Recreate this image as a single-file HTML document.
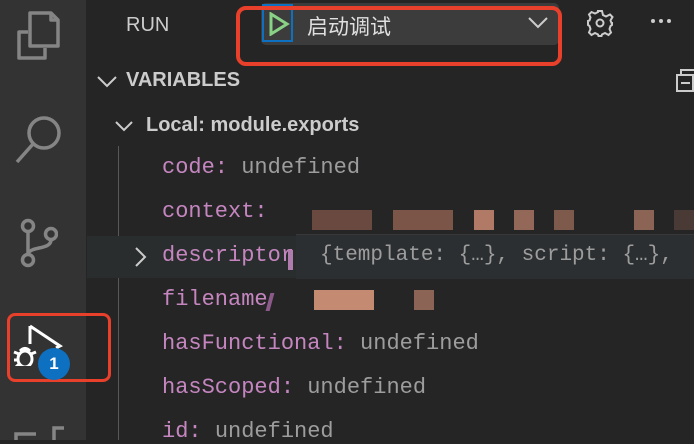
<!DOCTYPE html>
<html><head><meta charset="utf-8"><style>
body{margin:0;width:694px;height:440px;overflow:hidden;background:#252526;position:relative;font-family:"Liberation Sans","Noto Sans CJK SC",sans-serif}
.act{position:absolute;left:0;top:0;width:86px;height:440px;background:#333333}
.a{position:absolute}
.mono{font-family:"Liberation Mono",monospace;font-size:22px;position:absolute;white-space:pre}
.k{color:#c586c0}.v{color:#9d9d9d}
.pix{position:absolute;height:20px}
</style></head><body>
<div class="act"></div>
<svg class="a" style="left:14px;top:10px" width="50" height="52" viewBox="0 0 50 52" fill="none" stroke="#858585" stroke-width="3.5" stroke-linejoin="round">
<path d="M14 22 H5 V48 H31 V38"/><path d="M16 3 H37 L44 10 V36 H16 Z"/><path d="M37 3 V10 H44"/></svg>
<svg class="a" style="left:14px;top:113px" width="50" height="52" viewBox="0 0 50 52" fill="none" stroke="#858585" stroke-width="3.5">
<circle cx="30" cy="20" r="15"/><path d="M19 31 L3 49"/></svg>
<svg class="a" style="left:18px;top:218px" width="40" height="50" viewBox="0 0 40 50" fill="none" stroke="#858585" stroke-width="3.5">
<circle cx="10" cy="8" r="5.5"/><circle cx="10" cy="42" r="5.5"/><circle cx="33" cy="16" r="5.5"/><path d="M10 14 V36 M33 22 C33 32 12 28 10 36"/></svg>
<div class="a" style="left:7px;top:313px;width:104px;height:69px;border:3px solid #e8402a;border-radius:8px;box-sizing:border-box"></div>
<svg class="a" style="left:12px;top:322px" width="52" height="44" viewBox="0 0 52 44" fill="none" stroke="#fff" stroke-width="3">
<path d="M18 4 V22 M18 4 L48 24 L44 26"/><ellipse cx="13" cy="37" rx="7" ry="8"/><path d="M2 30 L7 32 M2 38 H6 M3 46 L7 42 M24 30 L19 32 M8 29 Q13 24 18 29"/></svg>
<div class="a" style="left:38px;top:348px;width:32px;height:32px;border-radius:50%;background:#0e70c0;color:#fff;font-weight:bold;font-size:17px;text-align:center;line-height:32px">1</div>
<svg class="a" style="left:14px;top:425px" width="50" height="15" viewBox="0 0 50 15" fill="none" stroke="#858585" stroke-width="3.5"><path d="M2 15 V9 H22 M40 15 V3 H54"/></svg>

<div class="a" style="left:126px;top:14px;color:#cccccc;font-size:20px">RUN</div>
<div class="a" style="left:261px;top:3px;width:298px;height:42px;background:#3c3c3c;border-radius:5px"></div>
<div class="a" style="left:262px;top:4px;width:31px;height:38px;border:2px solid #0e70c0;box-sizing:border-box"></div>
<svg class="a" style="left:268px;top:12px" width="22" height="24" viewBox="0 0 22 24" fill="none" stroke="#89d185" stroke-width="3"><path d="M3 2 L19 12 L3 22 Z"/></svg>
<div class="a" style="left:307px;top:11px;color:#e0e0e0;font-size:21px">启动调试</div>
<svg class="a" style="left:528px;top:17px" width="20" height="12" viewBox="0 0 20 12" fill="none" stroke="#ccc" stroke-width="2"><path d="M1 1 L10 10 L19 1"/></svg>
<div class="a" style="left:236px;top:6px;width:326px;height:60px;border:4px solid #e8402a;border-radius:10px;box-sizing:border-box"></div>
<svg class="a" style="left:585px;top:8px" width="30" height="30" viewBox="0 0 30 30" fill="none" stroke="#ccc" stroke-width="2">
<circle cx="15" cy="15" r="3.5"/><path d="M13 3 H17 L18 7 L21 8.5 L25 6.5 L27.5 9 L25.5 12.5 L26.5 15 L27 15 V17 L25.5 18 L24.5 21 L26 24.5 L23.5 27 L20 25 L17 26.5 L16.5 28 H13.5 L13 26.5 L10 25 L6.5 27 L4 24.5 L5.5 21 L4.5 18 L3 17 V13 L4.5 12.5 L5.5 9.5 L4 6.5 L6.5 4 L10 5.5 L13 4 Z"/></svg>
<div class="a" style="left:651px;top:19px;width:4px;height:4px;border-radius:2px;background:#ccc"></div>
<div class="a" style="left:659px;top:19px;width:4px;height:4px;border-radius:2px;background:#ccc"></div>
<div class="a" style="left:667px;top:19px;width:4px;height:4px;border-radius:2px;background:#ccc"></div>

<svg class="a" style="left:96px;top:75px" width="22" height="14" viewBox="0 0 22 14" fill="none" stroke="#ccc" stroke-width="2"><path d="M2 2 L11 11 L20 2"/></svg>
<div class="a" style="left:126px;top:69px;color:#cccccc;font-size:20px;font-weight:bold">VARIABLES</div>
<svg class="a" style="left:676px;top:68px" width="18" height="24" viewBox="0 0 18 24" fill="none" stroke="#ccc" stroke-width="2"><rect x="5" y="2" width="16" height="14"/><rect x="1" y="7" width="16" height="16" fill="#252526"/><path d="M5 15 H14"/></svg>
<svg class="a" style="left:114px;top:120px" width="20" height="14" viewBox="0 0 20 14" fill="none" stroke="#ccc" stroke-width="2"><path d="M2 2 L10 10 L18 2"/></svg>
<div class="a" style="left:146px;top:114px;color:#cccccc;font-size:20px;font-weight:bold">Local: module.exports</div>
<div class="a" style="left:118px;top:146px;width:1px;height:294px;background:#585858"></div>

<div class="a" style="left:87px;top:236px;width:607px;height:42px;background:#2a2d2e"></div>
<div class="a" style="left:296px;top:234px;width:398px;height:44px;background:#2c2f31;border-top:1px solid #383838"></div>

<div class="mono" style="left:162px;top:155px"><span class="k">code:</span> <span class="v">undefined</span></div>
<div class="mono" style="left:162px;top:199px"><span class="k">context:</span></div>
<div class="pix" style="left:312px;top:210px;width:60px;background:#6a4a40"></div>
<div class="pix" style="left:393px;top:210px;width:60px;background:#7a5548"></div>
<div class="pix" style="left:474px;top:210px;width:20px;background:#b07a66"></div>
<div class="pix" style="left:514px;top:210px;width:20px;background:#946858"></div>
<div class="pix" style="left:554px;top:210px;width:20px;background:#7e5a4c"></div>
<div class="pix" style="left:634px;top:210px;width:20px;background:#8c6455"></div>
<div class="pix" style="left:674px;top:210px;width:20px;background:#4a3a35"></div>
<svg class="a" style="left:134px;top:246px" width="14" height="22" viewBox="0 0 14 22" fill="none" stroke="#ccc" stroke-width="2"><path d="M2 2 L11 11 L2 20"/></svg>
<div class="mono" style="left:162px;top:243px"><span class="k">descriptor</span></div>
<div class="a" style="left:288px;top:250px;width:5px;height:20px;background:#b07cae"></div>
<div class="mono" style="left:320px;top:244px;color:#9d9d9d;font-size:21px">{template: {…}, script: {…},</div>
<div class="mono" style="left:162px;top:287px"><span class="k">filename</span></div>
<div class="a" style="left:268px;top:293px;width:4px;height:18px;background:#8c5a8a;transform:skewX(-15deg)"></div>
<div class="pix" style="left:314px;top:290px;width:60px;background:#c48a72"></div>
<div class="pix" style="left:414px;top:290px;width:20px;background:#8c6455"></div>
<div class="mono" style="left:162px;top:331px"><span class="k">hasFunctional:</span> <span class="v">undefined</span></div>
<div class="mono" style="left:162px;top:375px"><span class="k">hasScoped:</span> <span class="v">undefined</span></div>
<div class="mono" style="left:162px;top:419px"><span class="k">id:</span> <span class="v">undefined</span></div>
</body></html>
